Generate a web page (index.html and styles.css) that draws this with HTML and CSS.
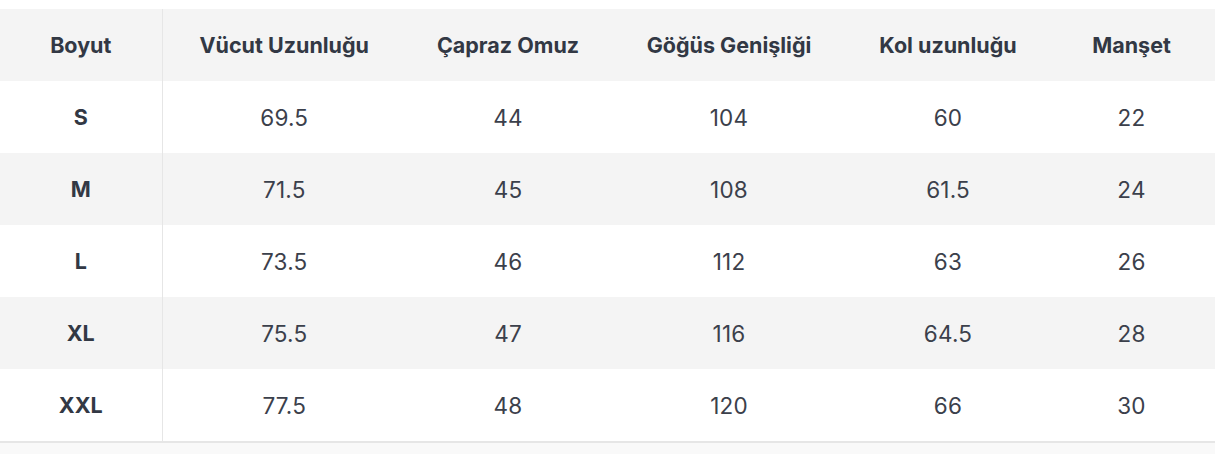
FILE: index.html
```html
<!DOCTYPE html>
<html lang="tr">
<head>
<meta charset="utf-8">
<link rel="stylesheet" href="styles.css">
</head>
<body>
<div class="wrap">
<table class="size-table">
  <colgroup>
    <col class="c1"><col class="c2"><col class="c3"><col class="c4"><col class="c5"><col class="c6">
  </colgroup>
  <thead>
    <tr><th class="first">Boyut</th><th>Vücut Uzunluğu</th><th>Çapraz Omuz</th><th>Göğüs Genişliği</th><th>Kol uzunluğu</th><th>Manşet</th></tr>
  </thead>
  <tbody>
    <tr><td class="first">S</td><td>69.5</td><td>44</td><td>104</td><td>60</td><td>22</td></tr>
    <tr class="alt"><td class="first">M</td><td>71.5</td><td>45</td><td>108</td><td>61.5</td><td>24</td></tr>
    <tr><td class="first">L</td><td>73.5</td><td>46</td><td>112</td><td>63</td><td>26</td></tr>
    <tr class="alt"><td class="first">XL</td><td>75.5</td><td>47</td><td>116</td><td>64.5</td><td>28</td></tr>
    <tr><td class="first">XXL</td><td>77.5</td><td>48</td><td>120</td><td>66</td><td>30</td></tr>
  </tbody>
</table>
<div class="foot"></div>
</div>
</body>
</html>
```

FILE: styles.css
```css
html, body {
  margin: 0;
  padding: 0;
  background: #ffffff;
}
body {
  font-family: Inter, "Liberation Sans", sans-serif;
  color: #343a46;
}
.wrap {
  width: 1215px;
  padding-top: 9px;
}
.size-table {
  width: 1215px;
  border-collapse: collapse;
  table-layout: fixed;
  border-bottom: 2px solid #e6e6e6;
}
.c1 { width: 162px; }
.c2 { width: 244px; }
.c3 { width: 204px; }
.c4 { width: 238px; }
.c5 { width: 200px; }
.c6 { width: 167px; }
.size-table th,
.size-table td {
  height: 72px;
  padding: 0;
  text-align: center;
  vertical-align: middle;
}
.size-table th {
  background: #f4f4f4;
  font-size: 21.5px;
  font-weight: 700;
  color: #323844;
}
.size-table td {
  font-size: 22.5px;
  font-weight: 400;
  letter-spacing: 0.2px;
  color: #3b404b;
}
.size-table .first {
  border-right: 1px solid #e6e6e6;
}
.size-table td.first {
  font-weight: 700;
  font-size: 21.5px;
  letter-spacing: 0;
  color: #323844;
}
.size-table tr.alt td {
  background: #f4f4f4;
}
.foot {
  height: 12px;
  background: #f9f9f9;
}
```
